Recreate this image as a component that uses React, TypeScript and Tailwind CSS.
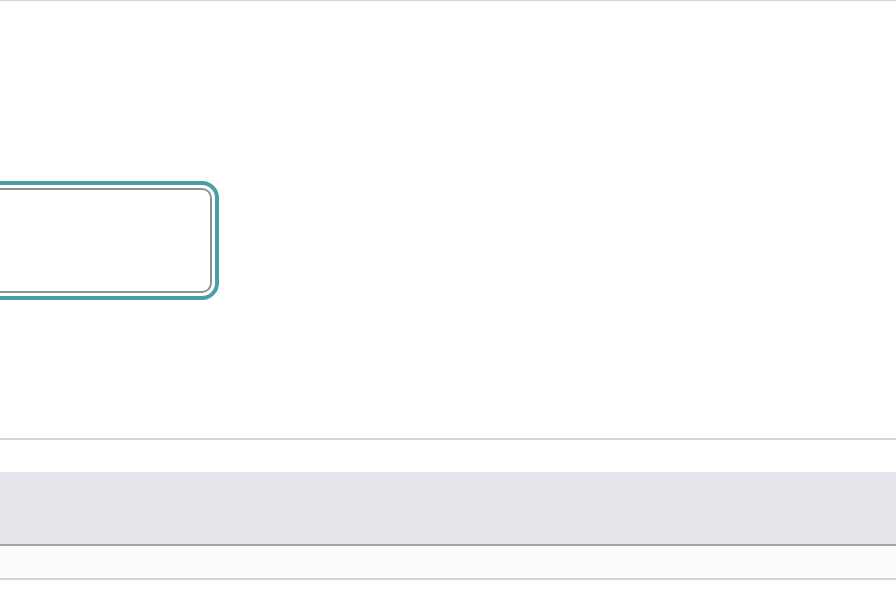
export default function App() {
  return (
    <div className="w-[896px] h-[590px] bg-white overflow-hidden flex flex-col font-['Liberation_Sans',sans-serif]">
      <div className="h-[1px] bg-[#d4d4d8] shrink-0" />
      <div className="h-[439px] shrink-0 pt-[180px] border-b-2 border-[#d4d4d8]">
        <div className="ml-[-42px] w-[261px] h-[119px] border-4 border-[#4a9ea8] rounded-[17px] p-[3px]">
          <div className="h-full w-full border-2 border-[#8f8f99] rounded-[10px]" />
        </div>
      </div>
      <div className="h-[32px] shrink-0" />
      <div className="h-[74px] shrink-0 bg-[#e5e6eb] border-b-2 border-[#a3a3ab] shadow-[0_2px_4px_rgba(0,0,0,0.06)]" />
      <div className="h-[34px] shrink-0 bg-[#fbfbfb] border-b-2 border-[#d6d6d9]" />
      <div className="flex-1" />
    </div>
  );
}
